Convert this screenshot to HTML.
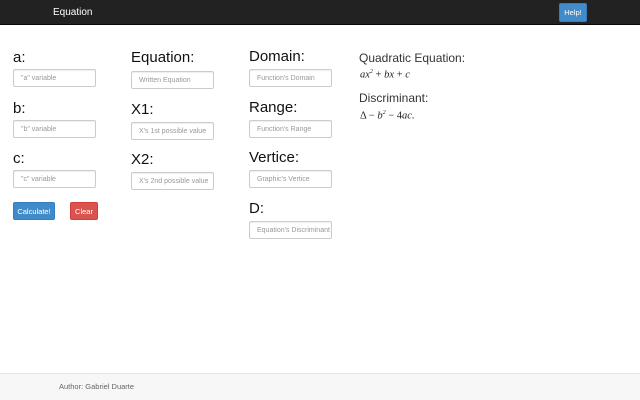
<!DOCTYPE html>
<html><head><style>
*{box-sizing:border-box;margin:0;padding:0}
body{width:640px;height:400px;overflow:hidden;background:#fff;font-family:"Liberation Sans",sans-serif;position:relative}
.nav{position:absolute;left:0;top:0;width:640px;height:25px;background:#222;border-bottom:1px solid #080808}
.brand{position:absolute;left:53px;top:7px;color:#fff;font-size:10px}
.help{position:absolute;left:559px;top:3px;width:28px;height:19px;background:#428bca;border:1px solid #357ebd;border-radius:2px;color:#fff;font-size:7.5px;line-height:17px;text-align:center}
.lbl{position:absolute;font-size:15px;color:#111;line-height:16px}
.in{position:absolute;width:83px;height:18px;border:1px solid #ccc;border-radius:2px;font-size:7px;color:#999;padding-left:7px;display:flex;align-items:center;box-shadow:inset 0 1px 1px rgba(0,0,0,.07);white-space:nowrap;overflow:hidden}
.btn{position:absolute;height:18px;border-radius:2px;color:#fff;font-size:7.5px;display:flex;align-items:center;justify-content:center}
.txt{position:absolute;font-size:12px;color:#333}
.math{position:absolute;font-family:"Liberation Serif",serif;font-style:italic;font-size:10.5px;color:#222}
.foot{position:absolute;left:0;top:373px;width:640px;height:27px;background:#f7f7f7;border-top:1px solid #e5e5e5}
.foot span{position:absolute;left:59px;top:8px;font-size:7.5px;color:#666}
</style></head><body>
<div class="nav"><div class="brand">Equation</div><div class="help">Help!</div></div>

<div class="lbl" style="left:13px;top:50px">a:</div>
<div class="in" style="left:13px;top:69px">"a" variable</div>
<div class="lbl" style="left:13px;top:101px">b:</div>
<div class="in" style="left:13px;top:120px">"b" variable</div>
<div class="lbl" style="left:13px;top:151px">c:</div>
<div class="in" style="left:13px;top:170px">"c" variable</div>
<div class="btn" style="left:13px;top:202px;width:42px;background:#428bca;border:1px solid #357ebd">Calculate!</div>
<div class="btn" style="left:70px;top:202px;width:28px;background:#d9534f;border:1px solid #d43f3a">Clear</div>

<div class="lbl" style="left:131px;top:50px">Equation:</div>
<div class="in" style="left:131px;top:71px">Written Equation</div>
<div class="lbl" style="left:131px;top:102px">X1:</div>
<div class="in" style="left:131px;top:122px">X's 1st possible value</div>
<div class="lbl" style="left:131px;top:152px">X2:</div>
<div class="in" style="left:131px;top:172px">X's 2nd possible value</div>

<div class="lbl" style="left:249px;top:49px">Domain:</div>
<div class="in" style="left:249px;top:69px">Function's Domain</div>
<div class="lbl" style="left:249px;top:100px">Range:</div>
<div class="in" style="left:249px;top:120px">Function's Range</div>
<div class="lbl" style="left:249px;top:150px">Vertice:</div>
<div class="in" style="left:249px;top:170px">Graphic's Vertice</div>
<div class="lbl" style="left:249px;top:201px">D:</div>
<div class="in" style="left:249px;top:221px">Equation's Discriminant</div>

<div class="txt" style="left:359px;top:51px">Quadratic Equation:</div>
<div class="math" style="left:360px;top:69px">ax<sup style="font-size:6px">2</sup> <span style="font-style:normal">+</span> bx <span style="font-style:normal">+</span> c</div>
<div class="txt" style="left:359px;top:91px">Discriminant:</div>
<div class="math" style="left:360px;top:110px"><span style="font-style:normal">Δ −</span> b<sup style="font-size:6px">2</sup> <span style="font-style:normal">− 4</span>ac.</div>

<div class="foot"><span>Author: Gabriel Duarte</span></div>
</body></html>
